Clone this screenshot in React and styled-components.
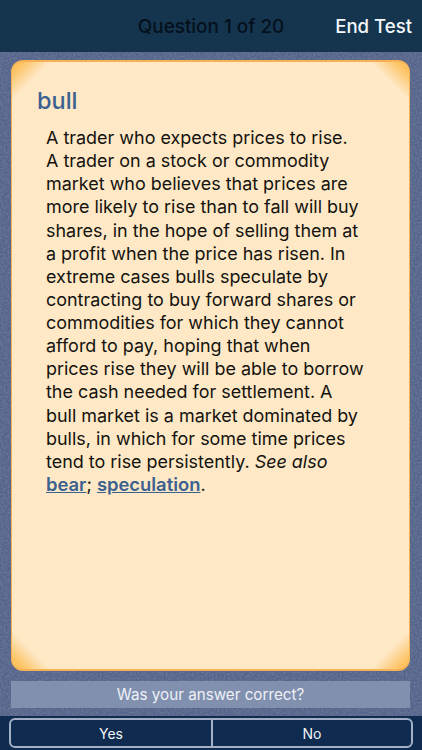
import styled, { createGlobalStyle } from 'styled-components';

const leather = `url("data:image/svg+xml,%3Csvg xmlns='http://www.w3.org/2000/svg' width='240' height='240'%3E%3Cfilter id='n'%3E%3CfeTurbulence type='fractalNoise' baseFrequency='0.5' numOctaves='2' seed='4'/%3E%3CfeColorMatrix values='0 0 0 0 0.14 0 0 0 0 0.18 0 0 0 0 0.3 2.4 0 0 0 -0.8'/%3E%3C/filter%3E%3Crect width='240' height='240' filter='url(%23n)'/%3E%3C/svg%3E")`;

const GlobalStyle = createGlobalStyle`
  html, body {
    margin: 0;
    padding: 0;
  }
  body {
    font-family: Inter, "Liberation Sans", sans-serif;
  }
`;

const Screen = styled.div`
  width: 422px;
  height: 750px;
  overflow: hidden;
  display: flex;
  flex-direction: column;
  background-color: #54638c;
  background-image: ${leather};
`;

const Header = styled.header`
  height: 52px;
  flex: none;
  background: #15354f;
  display: grid;
  grid-template-columns: 1fr auto 1fr;
  align-items: center;
  padding: 0 10px;
  font-size: 18.6px;
  font-weight: 500;
`;

const HeaderTitle = styled.div`
  color: #04101c;
  font-size: 18.9px;
`;

const EndTest = styled.button`
  justify-self: end;
  background: none;
  border: none;
  padding: 0;
  color: #f4f7fa;
  font: inherit;
`;

const Main = styled.main`
  flex: 1;
  display: flex;
  flex-direction: column;
  padding: 8px 12px 8px 11px;
  gap: 10px;
`;

const Card = styled.article`
  flex: 1;
  box-sizing: border-box;
  padding: 25px 20px 0 25px;
  border-radius: 12px;
  border: 1px solid #f4b255;
  border-top-width: 2px;
  border-bottom-width: 2px;
  background-color: #fee8c6;
  background-image:
    linear-gradient(135deg, #fdc362 0, #fdc362 8px, rgba(254,232,198,0) 27px),
    linear-gradient(225deg, #fdc362 0, #fdc362 8px, rgba(254,232,198,0) 27px),
    linear-gradient(45deg, #fdc362 0, #fdc362 8px, rgba(254,232,198,0) 27px),
    linear-gradient(315deg, #fdc362 0, #fdc362 8px, rgba(254,232,198,0) 27px);
`;

const Term = styled.h1`
  margin: 0 0 11px;
  color: #3a6190;
  font-size: 23.5px;
  line-height: 28px;
  font-weight: 500;
`;

const Definition = styled.p`
  margin: 0 0 0 9px;
  color: #14130f;
  font-size: 17.95px;
  line-height: 23.13px;
  white-space: nowrap;
`;

const RefLink = styled.a`
  color: #3a6190;
  font-weight: 600;
  font-size: 18.4px;
  text-decoration: underline;
`;

const Prompt = styled.div`
  height: 27px;
  flex: none;
  display: flex;
  align-items: center;
  justify-content: center;
  background: #8290b0;
  color: #eef1f6;
  font-size: 15.2px;
`;

const BottomBar = styled.footer`
  height: 34px;
  flex: none;
  box-sizing: border-box;
  padding: 2px 9px 2px;
  background: #0f2b4f;
`;

const Segments = styled.div`
  height: 100%;
  box-sizing: border-box;
  display: grid;
  grid-template-columns: 1fr 1fr;
  border: 2px solid #a3b0c6;
  border-radius: 6px;
`;

const Segment = styled.button`
  background: none;
  border: none;
  padding: 0;
  color: #f2f5f8;
  font-family: inherit;
  font-size: 14px;
  border-left: ${p => (p.$divided ? '2px solid #a3b0c6' : 'none')};
`;

export default function App() {
  return (
    <Screen>
      <GlobalStyle />
      <Header>
        <span />
        <HeaderTitle>Question 1 of 20</HeaderTitle>
        <EndTest>End Test</EndTest>
      </Header>
      <Main>
        <Card>
          <Term>bull</Term>
          <Definition>
            A trader who expects prices to rise.<br />
            A trader on a stock or commodity<br />
            market who believes that prices are<br />
            more likely to rise than to fall will buy<br />
            shares, in the hope of selling them at<br />
            a profit when the price has risen. In<br />
            extreme cases bulls speculate by<br />
            contracting to buy forward shares or<br />
            commodities for which they cannot<br />
            afford to pay, hoping that when<br />
            prices rise they will be able to borrow<br />
            the cash needed for settlement. A<br />
            bull market is a market dominated by<br />
            bulls, in which for some time prices<br />
            tend to rise persistently. <em>See also</em><br />
            <RefLink>bear</RefLink>; <RefLink>speculation</RefLink>.
          </Definition>
        </Card>
        <Prompt>Was your answer correct?</Prompt>
      </Main>
      <BottomBar>
        <Segments>
          <Segment>Yes</Segment>
          <Segment $divided>No</Segment>
        </Segments>
      </BottomBar>
    </Screen>
  );
}
